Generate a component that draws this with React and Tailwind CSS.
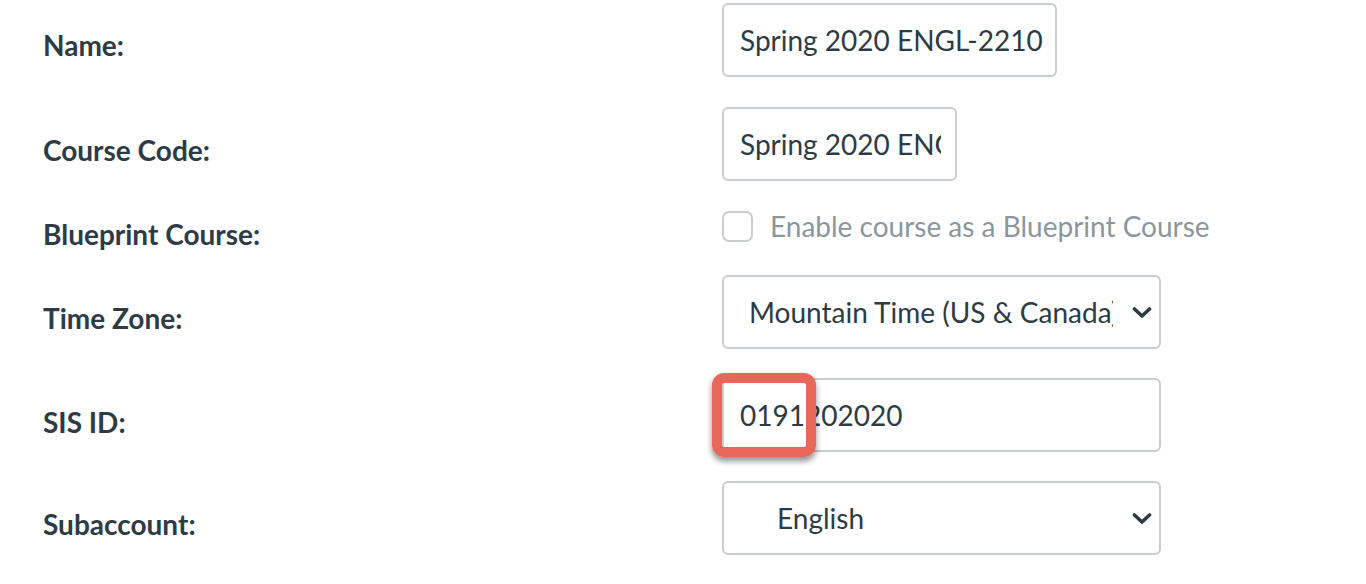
import React from 'react';

const font = { fontFamily: 'Lato, "Noto Sans", sans-serif' };

function Chevron() {
  return (
    <svg width="20" height="13" viewBox="0 0 20 13" className="shrink-0">
      <path d="M2.5 3 L10 10 L17.5 3" fill="none" stroke="#2d3b45" strokeWidth="3.6" strokeLinecap="round" strokeLinejoin="round" />
    </svg>
  );
}

function TextBox({ value, width, pr }) {
  return (
    <div className={`h-[74px] ${width} border-2 border-[#c7cdd1] rounded-[6px] bg-white flex items-center pl-[16px] ${pr} overflow-hidden`}>
      <span className="whitespace-nowrap overflow-hidden text-[28px] text-[#2d3b45]">{value}</span>
    </div>
  );
}

function SelectBox({ value, pad }) {
  return (
    <div className={`h-[74px] w-[439px] border-2 border-[#c7cdd1] rounded-[6px] bg-white flex items-center justify-between ${pad} pr-[7px]`}>
      <span className="w-[364px] whitespace-nowrap overflow-hidden text-[28px] text-[#2d3b45]">{value}</span>
      <Chevron />
    </div>
  );
}

function Row({ label, shift, className = '', children }) {
  return (
    <div className={`flex items-center ${className}`}>
      <div className={`w-[679px] shrink-0 font-bold text-[28px] leading-[32px] text-[#2d3b45] ${shift}`}>{label}</div>
      <div>{children}</div>
    </div>
  );
}

export default function App() {
  return (
    <div className="w-[1366px] h-[584px] bg-white pl-[43px] pt-[3px] overflow-hidden" style={font}>
      <Row label="Name:" shift="translate-y-[5px]">
        <TextBox value="Spring 2020 ENGL-2210" width="w-[335px]" pr="pr-[6px]" />
      </Row>
      <Row label="Course Code:" shift="translate-y-[6px]" className="mt-[30px]">
        <TextBox value="Spring 2020 ENGL-2210" width="w-[235px]" pr="pr-[14px]" />
      </Row>
      <Row label="Blueprint Course:" shift="translate-y-[8px]" className="mt-[29px]">
        <div className="flex items-center h-[32px]">
          <div className="w-[31px] h-[31px] border-2 border-[#c7cdd1] rounded-[7px] bg-white" />
          <span className="ml-[17px] text-[28px] leading-[32px] text-[#8b969e] whitespace-nowrap">Enable course as a Blueprint Course</span>
        </div>
      </Row>
      <Row label="Time Zone:" shift="translate-y-[6px]" className="mt-[33px]">
        <SelectBox value="Mountain Time (US & Canada)" pad="pl-[25px]" />
      </Row>
      <Row label="SIS ID:" shift="translate-y-[7px]" className="mt-[29px]">
        <div className="relative">
          <TextBox value="0191202020" width="w-[439px]" pr="pr-[14px]" />
          <div className="absolute left-[-10px] top-[-5px] w-[104px] h-[84px] border-[10px] border-[#e8665a] rounded-[12px] shadow-[0_4px_6px_rgba(0,0,0,0.45)]" />
        </div>
      </Row>
      <Row label="Subaccount:" shift="translate-y-[6px]" className="mt-[29px]">
        <SelectBox value="English" pad="pl-[53px]" />
      </Row>
    </div>
  );
}
